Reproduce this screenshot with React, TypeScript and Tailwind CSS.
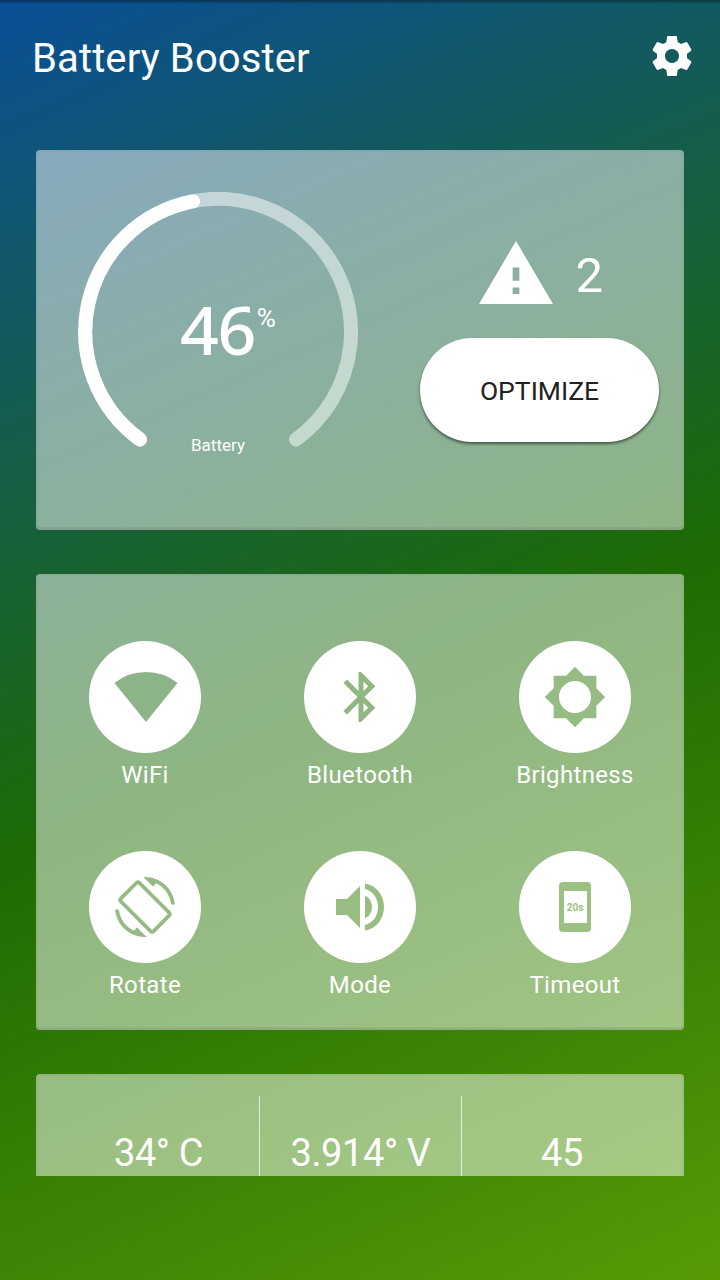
import type { ReactNode } from 'react';

const CARD =
  'rounded-[4px] bg-white/50 shadow-[inset_0_0_0_2px_rgba(120,120,120,0.1),inset_0_-4px_0_-1px_rgba(120,120,120,0.16)]';

// glyphs take the card colour behind them so they look cut out
function Toggle({ label, color, children }: { label: string; color: string; children: ReactNode }) {
  return (
    <button className="flex flex-col items-center">
      <span className={`flex h-[112px] w-[112px] items-center justify-center rounded-full bg-white ${color}`}>
        {children}
      </span>
      <span className="mt-[6px] text-[24px] leading-[32px] tracking-[0.35px]">{label}</span>
    </button>
  );
}

function Gauge() {
  return (
    <div className="relative h-[280px] w-[280px]">
      <svg viewBox="0 0 280 280" className="h-full w-full" fill="none" strokeWidth="14" strokeLinecap="round">
        <path d="M62 247.5A133 133 0 1 1 218 247.5" stroke="#fff" opacity="0.5" />
        <path d="M62 247.5A133 133 0 0 1 115 9.4" stroke="#fff" />
      </svg>
      <div className="absolute top-[99px] left-[102px] flex items-start">
        <span className="font-['Noto_Sans','sans-serif'] text-[68px] leading-[76px] font-medium tracking-[-1.5px]">46</span>
        <span className="mt-[11px] ml-[2px] text-[26px] leading-[32px]">%</span>
      </div>
      <span className="absolute top-[243px] left-0 w-full text-center text-[17px] leading-[21px]">Battery</span>
    </div>
  );
}

export default function App() {
  return (
    <main className="flex h-[1280px] w-[720px] flex-col overflow-hidden bg-[linear-gradient(156deg,#0a4f97_0%,#1e6b04_54.2%,#569b06_100%)] font-['Roboto','sans-serif'] text-white">
      <div className="-mb-[4px] h-[4px] shrink-0 bg-linear-to-b from-black/40 to-transparent" />
      <header className="flex h-[150px] shrink-0 items-start justify-between pt-[32px] pr-[24px] pl-[32px]">
        <h1 className="mt-px text-[40px] leading-[52px] tracking-[0.13px]">Battery Booster</h1>
        <svg viewBox="0 0 24 24" className="h-[48px] w-[48px]" fill="currentColor">
          <path d="M19.43 12.98c.04-.32.07-.64.07-.98s-.03-.66-.07-.98l2.11-1.65c.19-.15.24-.42.12-.64l-2-3.46c-.12-.22-.39-.3-.61-.22l-2.49 1c-.52-.4-1.08-.73-1.69-.98l-.38-2.65C14.46 2.18 14.25 2 14 2h-4c-.25 0-.46.18-.49.42l-.38 2.65c-.61.25-1.17.59-1.69.98l-2.49-1c-.23-.09-.49 0-.61.22l-2 3.46c-.13.22-.07.49.12.64l2.11 1.65c-.04.32-.07.65-.07.98s.03.66.07.98l-2.11 1.65c-.19.15-.24.42-.12.64l2 3.46c.12.22.39.3.61.22l2.49-1c.52.4 1.08.73 1.69.98l.38 2.65c.03.24.24.42.49.42h4c.25 0 .46-.18.49-.42l.38-2.65c.61-.25 1.17-.59 1.69-.98l2.49 1c.23.09.49 0 .61-.22l2-3.46c.12-.22.07-.49-.12-.64l-2.11-1.65zM12 15.5c-1.93 0-3.5-1.57-3.5-3.5s1.57-3.5 3.5-3.5 3.5 1.57 3.5 3.5-1.57 3.5-3.5 3.5z" />
        </svg>
      </header>

      <div className="flex h-[1026px] flex-col gap-[44px] overflow-hidden px-[36px]">
        <section className={`flex h-[380px] shrink-0 items-start pt-[42px] pl-[42px] ${CARD}`}>
          <Gauge />
          <div className="ml-[62px] flex w-[240px] flex-col pt-[44px]">
            <div className="flex h-[76px] items-start">
              <svg viewBox="1 2 22 19" className="mt-[5px] ml-[59px] h-[63px] w-[74px]" fill="currentColor" preserveAspectRatio="none">
                <path d="M1 21h22L12 2 1 21zm12-3h-2v-2h2v2zm0-4h-2v-4h2v4z" />
              </svg>
              <span className="mt-[11px] ml-[22.5px] text-[49px] leading-[58px]">2</span>
            </div>
            <button className="mt-[26px] h-[104px] w-[239px] rounded-full bg-white pt-px text-[26.5px] text-[#212121] shadow-[0_2px_3px_rgba(0,0,0,0.5)]">
              OPTIMIZE
            </button>
          </div>
        </section>

        <section
          className={`grid h-[456px] shrink-0 grid-cols-[215px_215px_215px] grid-rows-[210px_210px] pt-[67px] pl-[1.5px] ${CARD}`}
        >
          <Toggle label="WiFi" color="text-[#8db488]">
            <svg viewBox="0 0 64 52" className="ml-[2px] h-[52px] w-[64px]" fill="currentColor">
              <path d="M.5 12Q14 1 32 1T63.500 12L32 51Z" />
            </svg>
          </Toggle>
          <Toggle label="Bluetooth" color="text-[#90b682]">
            <svg viewBox="0 0 24 24" className="ml-[2px] h-[60px] w-[60px]" fill="currentColor">
              <path d="M17.71 7.71L12 2h-1v7.590L6.410 5 5 6.410 10.590 12 5 17.590 6.410 19 11 14.410V22h1l5.710-5.710-4.300-4.290 4.300-4.290zM13 5.830l1.880 1.880L13 9.590V5.830zm1.880 10.460L13 18.170v-3.760l1.880 1.880z" />
            </svg>
          </Toggle>
          <Toggle label="Brightness" color="text-[#97bc83]">
            <svg viewBox="0 0 24 24" className="h-[64px] w-[64px]" fill="currentColor">
              <path d="M20 15.310L23.310 12 20 8.690V4h-4.690L12 .69 8.690 4H4v4.690L.69 12 4 15.310V20h4.690L12 23.310 15.310 20H20v-4.690zM12 18c-3.310 0-6-2.690-6-6s2.690-6 6-6 6 2.690 6 6-2.690 6-6 6z" />
            </svg>
          </Toggle>
          <Toggle label="Rotate" color="text-[#95ba83]">
            <svg viewBox="0 0 24 24" className="h-[60px] w-[60px]" fill="currentColor">
              <path d="M10.230 1.750c-.59-.59-1.540-.59-2.120 0L1.750 8.110c-.59.59-.59 1.540 0 2.120l12.020 12.020c.59.59 1.540.59 2.120 0l6.360-6.360c.59-.59.59-1.540 0-2.120L10.230 1.750zm4.600 19.440L2.810 9.170l6.360-6.360 12.020 12.020-6.360 6.360zm-7.310.29C4.250 19.940 1.910 16.760 1.550 13H.05C.56 19.160 5.710 24 12 24l.66-.03-3.810-3.810-1.330 1.320zM12 0l-.66.03 3.810 3.810 1.330-1.330C19.750 4.060 22.090 7.240 22.450 11h1.500C23.440 4.840 18.290 0 12 0z" />
            </svg>
          </Toggle>
          <Toggle label="Mode" color="text-[#98bd81]">
            <svg viewBox="0 0 48 48" className="h-[48px] w-[48px]" fill="currentColor">
              <path d="M0 16h11L24 3v42L11 32H0zM29 13c4 1 7 6 7 11s-3 10-7 11zM29 .5C40 2 48 12 48 24s-8 22-19 23.500v-5.500c8-2 13-9 13-18S37 8 29 6z" />
            </svg>
          </Toggle>
          <Toggle label="Timeout" color="text-[#9dc182]">
            <span className="flex h-[50px] w-[32px] items-center justify-center rounded-[4px] bg-[#9dc182]">
              <span className="flex h-[32px] w-[23px] items-center justify-center bg-white text-[10px] font-bold">20s</span>
            </span>
          </Toggle>
        </section>

        <section className={`flex h-[204px] shrink-0 items-start pt-[22px] text-[38px] leading-[44px] tracking-[-0.4px] ${CARD}`}>
          <div className="h-[180px] w-[224px] border-r border-white/70 pt-[35px] pl-[22px] text-center">34° C</div>
          <div className="h-[180px] w-[202px] border-r border-white/70 pt-[35px] text-center">3.914° V</div>
          <div className="h-[180px] w-[222px] pt-[35px] pr-[22px] text-center">45</div>
        </section>
      </div>
    </main>
  );
}
